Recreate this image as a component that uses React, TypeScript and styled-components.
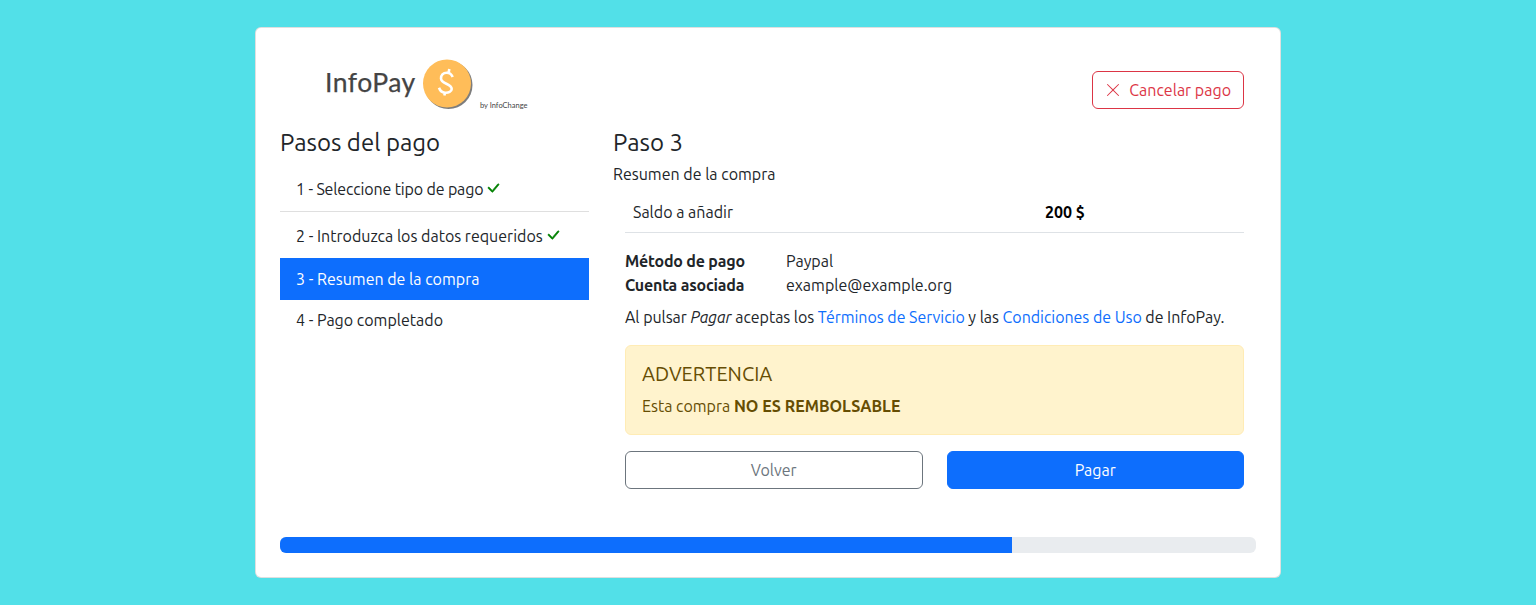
import styled, { createGlobalStyle } from "styled-components";

const GlobalStyle = createGlobalStyle`
    html, body {
        margin: 0;
        padding: 0;
    }
    * {
        box-sizing: border-box;
    }
    body {
        background: #52e0e8;
        color: #212529;
        font-family: "Ubuntu", "Noto Sans", sans-serif;
        font-size: 16px;
        line-height: 24px;
    }
`;

export default function App() {
    return (
        <Page>
            <GlobalStyle />
            <Card>
                <Header>
                    <Logo>
                        <LogoName>InfoPay</LogoName>
                        <LogoCoin>
                            <svg width="52" height="52" viewBox="0 0 52 52">
                                <circle cx="25.500" cy="26" r="24" fill="#7d7d7d" />
                                <circle cx="24" cy="24.500" r="24" fill="#ffbd59" />
                                <path
                                    d="M29.700 18C28.500 15 26 13.700 23.700 13.700C20 13.700 18 16.500 18 19.500C18 25 28.700 24.500 28.700 30C28.700 32.500 25.500 34 22 33.700C19 33.500 17 31.500 16 28.700M26.300 10L25.600 14M22.300 33L21.300 36.500"
                                    fill="none"
                                    stroke="#fff"
                                    strokeWidth="2.600"
                                />
                            </svg>
                        </LogoCoin>
                        <LogoBy>by InfoChange</LogoBy>
                    </Logo>
                    <CancelButton>
                        <svg width="16" height="16" viewBox="0 0 16 16" fill="currentColor">
                            <path d="M2.146 2.854a.5.5 0 1 1 .708-.708L8 7.293l5.146-5.147a.5.5 0 0 1 .708.708L8.707 8l5.147 5.146a.5.5 0 0 1-.708.708L8 8.707l-5.146 5.147a.5.5 0 0 1-.708-.708L7.293 8 2.146 2.854Z" />
                        </svg>
                        Cancelar pago
                    </CancelButton>
                </Header>
                <Columns>
                    <Sidebar>
                        <SideHeading>Pasos del pago</SideHeading>
                        <Steps>
                            {steps.map((s) => (
                                <Step key={s.label} $active={s.active} $tall={s.tall} $line={s.line}>
                                    {s.label}
                                    {s.done && (
                                        <Check width="16" height="16" viewBox="0 0 16 16" fill="currentColor" stroke="currentColor" strokeWidth="0.6">
                                            <path d="M12.736 3.97a.733.733 0 0 1 1.047 0c.286.289.29.756.01 1.05L7.880 12.010a.733.733 0 0 1-1.065.020L3.217 8.384a.757.757 0 0 1 0-1.060.733.733 0 0 1 1.047 0l3.052 3.093 5.400-6.425a.247.247 0 0 1 .020-.022Z" />
                                        </Check>
                                    )}
                                </Step>
                            ))}
                        </Steps>
                    </Sidebar>
                    <Main>
                        <Heading>Paso 3</Heading>
                        <Subtitle>Resumen de la compra</Subtitle>
                        <Body>
                            <TotalRow>
                                <TotalLabel>Saldo a añadir</TotalLabel>
                                <TotalValue>200 $</TotalValue>
                            </TotalRow>
                            <Details>
                                <dt>Método de pago</dt>
                                <dd>Paypal</dd>
                                <dt>Cuenta asociada</dt>
                                <dd>example@example.org</dd>
                            </Details>
                            <Terms>
                                Al pulsar <em>Pagar</em> aceptas los <a href="#t">Términos de Servicio</a> y las{" "}
                                <a href="#c">Condiciones de Uso</a> de InfoPay.
                            </Terms>
                            <Alert>
                                <AlertTitle>ADVERTENCIA</AlertTitle>
                                <AlertText>
                                    Esta compra <strong>NO ES REMBOLSABLE</strong>
                                </AlertText>
                            </Alert>
                            <Actions>
                                <BackButton>Volver</BackButton>
                                <PayButton>Pagar</PayButton>
                            </Actions>
                        </Body>
                    </Main>
                </Columns>
                <Progress>
                    <ProgressBar style={{ width: "75%" }} />
                </Progress>
            </Card>
        </Page>
    );
}

const steps = [
    { label: "1 - Seleccione tipo de pago", done: true, line: true },
    { label: "2 - Introduzca los datos requeridos", done: true, tall: true },
    { label: "3 - Resumen de la compra", active: true },
    { label: "4 - Pago completado" },
];

const Page = styled.div`
    height: 605px;
    padding-top: 27px;
    overflow: hidden;
`;

const Card = styled.div`
    width: 1026px;
    height: 551px;
    margin: 0 auto;
    padding: 27px 24px 24px;
    background: #fff;
    border: 1px solid rgba(0, 0, 0, 0.125);
    border-radius: 6px;
    display: flex;
    flex-direction: column;
`;

const Header = styled.div`
    height: 73px;
    padding-right: 12px;
    display: flex;
    align-items: flex-start;
    justify-content: space-between;
`;

const Logo = styled.div`
    width: 248px;
    height: 58px;
    padding-left: 45px;
    display: flex;
    align-items: flex-start;
`;

const LogoName = styled.div`
    width: 98px;
    margin-top: 10px;
    font-family: "Lato", sans-serif;
    font-size: 26.5px;
    line-height: 34px;
    letter-spacing: 0.5px;
    -webkit-text-stroke: 0.25px #444;
    color: #444;
`;

const LogoCoin = styled.div`
    margin-top: 4px;
    height: 52px;
`;

const LogoBy = styled.div`
    margin: 46px 0 0 5px;
    font-family: "Lato", sans-serif;
    font-size: 7.5px;
    line-height: 10px;
    white-space: nowrap;
    color: #444;
`;

const CancelButton = styled.button`
    margin-top: 16px;
    height: 38px;
    padding: 0 12px;
    display: flex;
    align-items: center;
    gap: 8px;
    font: inherit;
    color: #dc3545;
    background: transparent;
    border: 1px solid #dc3545;
    border-radius: 6px;
`;

const Columns = styled.div`
    flex: 1;
    display: flex;
    gap: 24px;
`;

const Sidebar = styled.div`
    width: 309px;
`;

const Heading = styled.h4`
    margin: 0 0 5px;
    font-size: 24px;
    font-weight: 400;
    line-height: 29px;
`;

const SideHeading = styled(Heading)`
    margin-bottom: 12px;
`;

const Steps = styled.ul`
    margin: 0;
    padding: 0;
    list-style: none;
`;

const Step = styled.li<{ $active?: boolean; $tall?: boolean; $line?: boolean }>`
    padding: ${(p) => (p.$tall ? "12px 16px 10px" : p.$active ? "9px 16px 8px" : "8px 16px 9px")};
    height: ${(p) => (p.$tall ? "46px" : p.$line ? "43px" : "42px")};
    letter-spacing: ${(p) => (p.$line ? "-0.15px" : "0")};
    color: ${(p) => (p.$active ? "#fff" : "#212529")};
    background: ${(p) => (p.$active ? "#0d6efd" : "transparent")};
    border-bottom: ${(p) => (p.$line ? "1px solid rgba(0, 0, 0, 0.125)" : "0")};
`;

const Check = styled.svg`
    margin-left: 2px;
    color: green;
    vertical-align: -1px;
`;

const Main = styled.div`
    width: 631px;
`;

const Subtitle = styled.p`
    margin: 0;
`;

const Body = styled.div`
    padding-left: 12px;
`;

const TotalRow = styled.div`
    height: 41px;
    margin-top: 6px;
    margin-bottom: 16px;
    padding: 8px;
    display: flex;
    border-bottom: 1px solid #dee2e6;
`;

const TotalLabel = styled.div`
    width: 412px;
    color: #212529;
`;

const TotalValue = styled.div`
    font-weight: 700;
    color: #000;
`;

const Details = styled.dl`
    margin: 0 0 8px;
    display: grid;
    grid-template-columns: 161px 1fr;

    dt {
        font-weight: 700;
        letter-spacing: -0.2px;
    }
    dd {
        margin: 0;
    }
`;

const Terms = styled.p`
    margin: 0 0 16px;
    letter-spacing: -0.04px;

    a {
        color: #0d6efd;
        text-decoration: none;
    }
`;

const Alert = styled.div`
    height: 90px;
    margin-bottom: 16px;
    padding: 16px;
    color: #664d03;
    background: #fff3cd;
    border: 1px solid #ffecb5;
    border-radius: 6px;
`;

const AlertTitle = styled.h5`
    margin: 0 0 8px;
    font-size: 20px;
    font-weight: 400;
    line-height: 24px;
`;

const AlertText = styled.div``;

const Actions = styled.div`
    display: flex;
    gap: 24px;
`;

const BackButton = styled.button`
    flex: 1;
    height: 38px;
    font: inherit;
    color: #6c757d;
    background: #fff;
    border: 1px solid #6c757d;
    border-radius: 6px;
`;

const PayButton = styled(BackButton)`
    color: #fff;
    background: #0d6efd;
    border-color: #0d6efd;
`;

const Progress = styled.div`
    height: 16px;
    background: #e9ecef;
    border-radius: 6px;
    overflow: hidden;
`;

const ProgressBar = styled.div`
    height: 100%;
    background: #0d6efd;
`;
